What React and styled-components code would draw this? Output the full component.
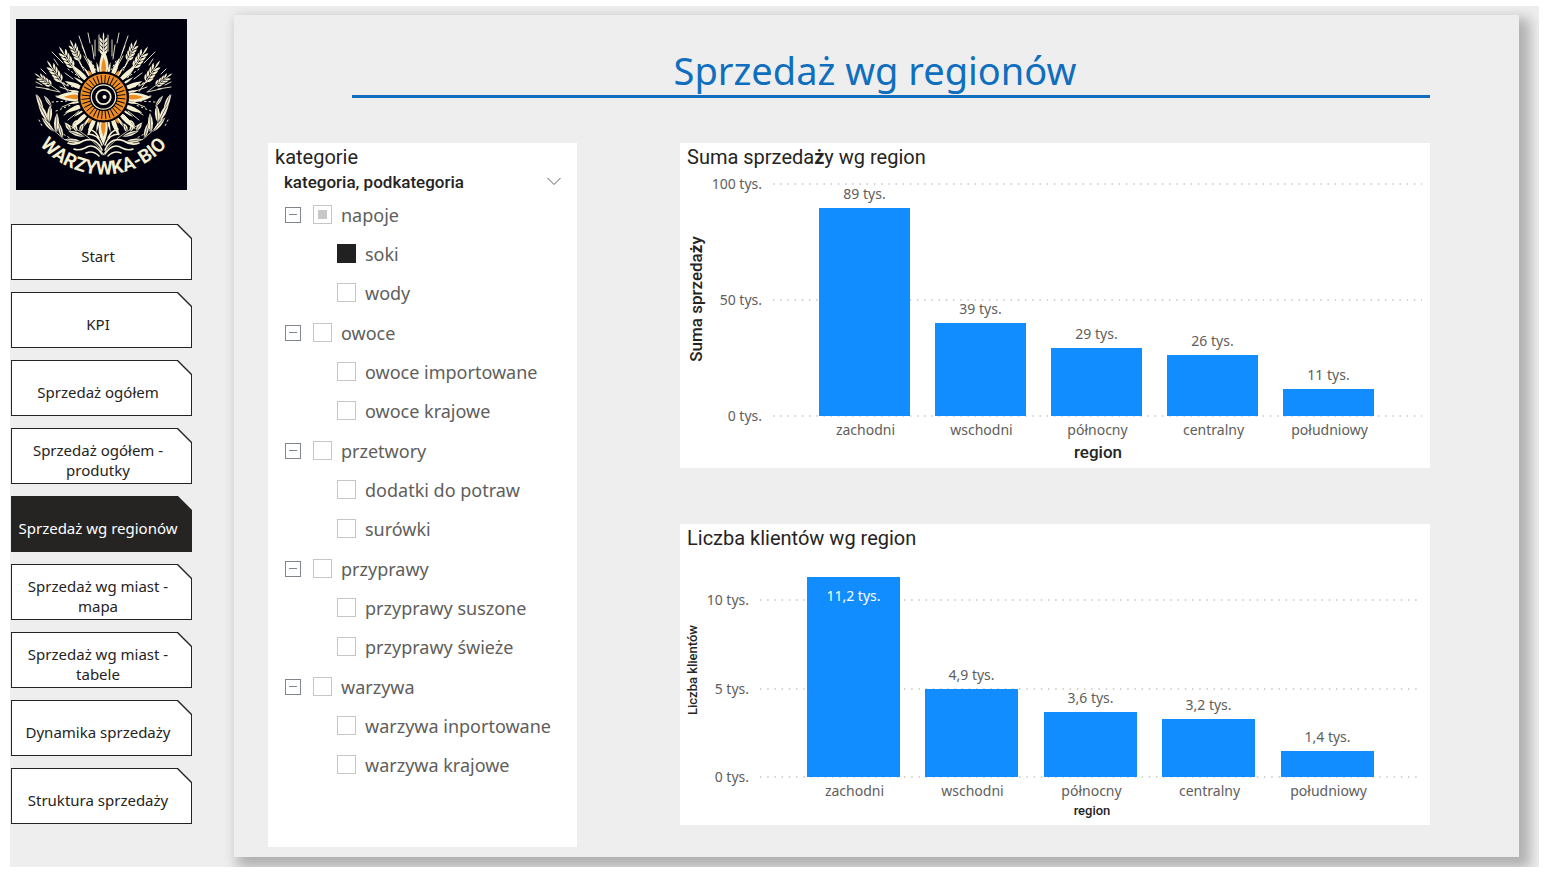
import React, { useEffect, useRef, useState } from 'react';
import styled, { createGlobalStyle } from 'styled-components';

const SANS = '"Noto Sans", "Liberation Sans", sans-serif';
const DIN = 'Roboto, "Noto Sans", sans-serif';
const INK = '#252423';
const MUTED = '#605e5c';
const BLUE = '#118dff';
const CREAM = '#f6f0d2';
const ORANGE = '#ee8d22';
const NIGHT = '#00000f';

const GlobalStyle = createGlobalStyle`
  *, *::before, *::after { box-sizing: border-box; }
  body { margin: 0; background: #fff; color: ${INK}; font-family: ${SANS}; }
  h1, h2, h3, ul { margin: 0; padding: 0; }
  ul { list-style: none; }
  button { font: inherit; }
`;

const Canvas = styled.div`
  display: flex;
  gap: 42px;
  margin: 6px 12px 8px 10px;
  padding: 9px 20px 10px 0;
  background: #eee;
  overflow: hidden;
`;

const Sidebar = styled.aside`
  flex: 0 0 182px;
  display: flex;
  flex-direction: column;
  gap: 34px;
  padding-top: 4px;
`;

const LogoBox = styled.svg`
  display: block;
  width: 171px;
  height: 171px;
  margin-left: 6px;
`;

const Nav = styled.nav`
  display: flex;
  flex-direction: column;
  gap: 12px;
  padding-left: 1px;
`;

const NavButton = styled.button`
  position: relative;
  isolation: isolate;
  height: 56px;
  padding: 8px 9px 0 2px;
  border: 0;
  background: ${INK};
  color: ${(p) => (p.$active ? '#fff' : INK)};
  font-size: 15px;
  line-height: 20px;
  text-align: center;
  cursor: pointer;
  clip-path: polygon(0 0, calc(100% - 14px) 0, 100% 14px, 100% 100%, 0 100%);

  &::before {
    content: '';
    position: absolute;
    z-index: -1;
    inset: 1px;
    background: ${(p) => (p.$active ? INK : '#fff')};
    clip-path: polygon(0 0, calc(100% - 14px) 0, 100% 14px, 100% 100%, 0 100%);
  }
`;

const Report = styled.main`
  flex: 1;
  min-width: 0;
  padding: 0 89px 10px 34px;
  background: #eee;
  box-shadow: 7px 7px 12px 4px rgba(0, 0, 0, 0.26);
`;

const Title = styled.h1`
  margin: 0 0 45px 84px;
  padding: 31px 32px 0 0;
  border-bottom: 3px solid #106ebe;
  color: #106ebe;
  font-size: 38px;
  font-weight: 400;
  line-height: 49px;
  text-align: center;
`;

const Columns = styled.div`
  display: grid;
  grid-template-columns: 309px minmax(0, 1fr);
  gap: 103px;
`;

const Charts = styled.div`
  display: flex;
  flex-direction: column;
  gap: 56px;
`;

const Card = styled.section`
  background: #fff;
`;

const SlicerCard = styled(Card)`
  min-height: 704px;
`;

const CardTitle = styled.h2`
  padding: 0 7px;
  font-family: ${DIN};
  font-size: 20px;
  font-weight: 400;
  line-height: 28px;
`;

const SlicerHeader = styled.div`
  display: flex;
  align-items: center;
  justify-content: space-between;
  height: 24px;
  padding: 0 16px 2px;
`;

const SlicerField = styled.h3`
  font-family: ${DIN};
  font-size: 17px;
  font-weight: 500;
  line-height: 24px;
`;

const IconButton = styled.button`
  display: flex;
  padding: 0;
  border: 0;
  background: none;
  cursor: pointer;
`;

const Tree = styled.ul`
  padding: 0 17px;
`;

const Group = styled.li`
  & + & { margin-top: 1px; }
`;

const Row = styled.div`
  display: flex;
  align-items: center;
  gap: 12px;
  height: 39px;
  padding-left: ${(p) => (p.$child ? 52 : 0)}px;
`;

const OptionLabel = styled.label`
  display: flex;
  align-items: center;
  gap: 9px;
  color: ${MUTED};
  font-size: 18px;
  line-height: 24px;
  white-space: nowrap;
`;

const Tick = styled.input`
  appearance: none;
  width: 19px;
  height: 19px;
  margin: 0;
  border: 1px solid #c8c6c4;
  background: #fff;

  &:checked { background: #212121; border-color: #212121; }
  &:indeterminate {
    background: #c8c8c8;
    box-shadow: inset 0 0 0 4px #fff;
  }
`;

const ChartSvg = styled.svg`
  display: block;
  width: 100%;
  height: auto;
`;

const AxisText = styled.text`
  fill: ${(p) => (p.$inside ? '#fff' : MUTED)};
  font-family: ${SANS};
  font-size: 14px;
`;

const AxisTitle = styled.text`
  fill: ${INK};
  font-family: ${DIN};
  font-size: ${(p) => p.$size}px;
  font-weight: 500;
  text-anchor: middle;
`;

const LogoText = styled.text`
  fill: ${CREAM};
  font-family: Roboto, "Liberation Sans", sans-serif;
  font-size: 19px;
  font-weight: 700;
  text-anchor: middle;
`;

/* ---------- logo ---------- */

const CX = 87.5;
const CY = 78;

function Flame({ angle, from, to, width, fill }) {
  const mid = from + (to - from) * 0.35;
  return (
    <path
      transform={`translate(${CX} ${CY}) rotate(${angle})`}
      fill={fill}
      d={`M${-width * 0.6} ${-from} Q${-width} ${-mid} 0 ${-to} Q${width * 1.3} ${-mid} ${width * 0.6} ${-from}Z`}
    />
  );
}

function Wheat({ x, y, angle, scale = 1 }) {
  return (
    <g transform={`translate(${x} ${y}) rotate(${angle}) scale(${scale})`} fill={CREAM}>
      <path d="M0 2V29" stroke={CREAM} strokeWidth="0.8" />
      <path d="M0 -5Q-1.6 0 0 3Q1.6 0 0 -5Z" />
      {[3, 7, 11, 15].map((d) => (
        <path
          key={d}
          d={`M-0.4 ${d + 3}Q-4.6 ${d + 1.4} -3.8 ${d - 3}Q-0.8 ${d - 1} -0.4 ${d + 3}ZM0.4 ${d + 3}Q4.6 ${d + 1.4} 3.8 ${d - 3}Q0.8 ${d - 1} 0.4 ${d + 3}Z`}
        />
      ))}
    </g>
  );
}

function Leaf({ x, y, angle, len = 14, w = 3 }) {
  return (
    <g transform={`translate(${x} ${y}) rotate(${angle})`}>
      <path fill={CREAM} d={`M0 0Q${-w} ${-len / 2} 0 ${-len}Q${w} ${-len / 2} 0 0Z`} />
      <path stroke={NIGHT} strokeWidth="0.5" d={`M0 0V${-len + 3}`} />
    </g>
  );
}

function HalfGarland() {
  return (
    <g fill="none" strokeLinecap="round">
      <Wheat x={56} y={25} angle={-24} />
      <Wheat x={46} y={32} angle={-33} scale={1.1} />
      <Wheat x={34} y={46} angle={-34} scale={1.1} />
      <Wheat x={22} y={57} angle={-54} scale={0.9} />
      <path
        stroke={CREAM}
        strokeWidth="0.9"
        d="M36 33L47 44M63 17L69 34M72 14L74 24M79 21V37M83 16V32M66 27L72 42M68 37L74 48M20 68L33 70M25 50L30 55M38 40L42 46M53 40L60 50M76 26L78 40M59 35L66 48M49 54L57 60M20 63L26 66M44 68L58 73M46 88L58 83M48 96L60 88M52 101L63 92M57 106L67 96M66 107L73 99M74 110L79 102M30 70L44 73M38 60L52 67"
      />
      <path
        stroke={CREAM}
        strokeWidth="1"
        strokeDasharray="1.5 3"
        d="M40 77L50 78M36 83L52 82M40 92L55 86M43 62L57 68M52 50L63 58M64 44L71 53M75 42L80 51M58 108L67 100M23 101L27 109M33 104L37 111M40 111L54 119"
      />
      <path stroke={CREAM} strokeWidth="0.8" d="M20 76Q25 104 49 121M88 136Q78 118 49 104" />
      <Leaf x={27} y={91} angle={-22} len={17} w={4} />
      <Leaf x={32} y={102} angle={-28} len={19} w={5} />
      <Leaf x={38} y={113} angle={-40} len={19} w={4} />
      <Leaf x={33} y={104} angle={4} len={18} w={5} />
      <Leaf x={40} y={114} angle={3} len={20} w={5} />
      <Leaf x={47} y={120} angle={-16} len={18} w={4} />
      <Leaf x={36} y={88} angle={-35} len={14} w={3} />
      <Leaf x={55} y={112} angle={-34} len={10} w={4} />
      <Leaf x={61} y={113} angle={-24} len={10} w={4} />
      <Leaf x={57} y={109} angle={24} len={9} w={4} />
      <Leaf x={64} y={113} angle={18} len={9} w={4} />
      <Leaf x={69} y={118} angle={-70} len={18} w={4} />
      <Leaf x={66} y={123} angle={-82} len={18} w={4} />
      <path
        stroke={CREAM}
        strokeWidth="1.6"
        d="M86 131Q80 117 67 122Q60 127 52 124M86 135Q78 123 69 129Q63 132 58 130M86 126Q82 115 72 115M83 137Q77 131 70 134M83 119Q80 112 73 110"
      />
    </g>
  );
}

function Logo() {
  const spokes = Array.from({ length: 32 }, (_, i) => i * 11.25);
  return (
    <LogoBox viewBox="0 0 171 171" role="img" aria-label="Warzywka-Bio">
      <rect width="171" height="171" fill={NIGHT} />
      <HalfGarland />
      <g transform="translate(175 0) scale(-1 1)">
        <HalfGarland />
      </g>
      <Wheat x={87.5} y={18} angle={0} />
      {spokes.map((a, i) => (
        <Flame key={a} angle={a} from={25} to={i % 2 ? 36 : 41} width={1.4} fill={CREAM} />
      ))}
      {[22, 45, 68, 112, 135, 158, 202, 225, 248, 292, 315, 338].map((a) => (
        <Flame key={a} angle={a} from={25} to={a % 45 ? 42 : 46} width={3} fill={CREAM} />
      ))}
      {[30, 150, 210, 330].map((a) => (
        <Flame key={a} angle={a} from={24} to={31} width={2} fill={ORANGE} />
      ))}
      {[0, 90, 180, 270].map((a) => (
        <g key={a}>
          <Flame angle={a} from={25} to={48} width={6} fill={CREAM} />
          <Flame angle={a} from={25} to={40} width={3} fill={ORANGE} />
        </g>
      ))}
      <circle cx={CX} cy={CY} r="25.5" fill={NIGHT} />
      <circle cx={CX} cy={CY} r="18.5" fill="none" stroke={ORANGE} strokeWidth="9.5" />
      {spokes.map((a) => (
        <path key={a} transform={`translate(${CX} ${CY}) rotate(${a + 5})`} stroke={NIGHT} strokeWidth="0.9" d="M0 -13V-22" />
      ))}
      <circle cx={CX} cy={CY} r="14" fill={NIGHT} />
      <circle cx={CX} cy={CY} r="12.2" fill="none" stroke={CREAM} strokeWidth="1.2" />
      <circle cx={CX} cy={CY} r="7.2" fill="none" stroke={CREAM} strokeWidth="1.8" />
      <circle cx={CX + 1} cy={CY} r="2" fill={CREAM} />
      <path id="logo-arc" d="M4 72A83 83 0 0 0 171 72" fill="none" />
      <LogoText>
        <textPath href="#logo-arc" startOffset="50%">WARZYWKA-BIO</textPath>
      </LogoText>
    </LogoBox>
  );
}

/* ---------- slicer ---------- */

const CATEGORIES = [
  { name: 'napoje', items: ['soki', 'wody'] },
  { name: 'owoce', items: ['owoce importowane', 'owoce krajowe'] },
  { name: 'przetwory', items: ['dodatki do potraw', 'surówki'] },
  { name: 'przyprawy', items: ['przyprawy suszone', 'przyprawy świeże'] },
  { name: 'warzywa', items: ['warzywa inportowane', 'warzywa krajowe'] },
];

function Option({ name, checked, partial = false, onChange }) {
  const ref = useRef(null);
  useEffect(() => {
    ref.current.indeterminate = partial;
  }, [partial]);
  return (
    <OptionLabel>
      <Tick ref={ref} type="checkbox" checked={checked} onChange={onChange} />
      {name}
    </OptionLabel>
  );
}

function Slicer() {
  const [selected, setSelected] = useState(['soki']);
  const [closed, setClosed] = useState([]);
  const flip = (list, name) => (list.includes(name) ? list.filter((n) => n !== name) : [...list, name]);

  return (
    <SlicerCard>
      <CardTitle>kategorie</CardTitle>
      <SlicerHeader>
        <SlicerField>kategoria, podkategoria</SlicerField>
        <IconButton type="button" aria-label="Rozwiń listę">
          <svg width="14" height="12" viewBox="0 0 14 12" fill="none" stroke={MUTED}>
            <path d="M0.5 2L7 8.5L13.5 2" />
          </svg>
        </IconButton>
      </SlicerHeader>
      <Tree>
        {CATEGORIES.map(({ name, items }) => {
          const count = items.filter((i) => selected.includes(i)).length;
          const all = count === items.length;
          return (
            <Group key={name}>
              <Row>
                <IconButton type="button" aria-label={`Zwiń ${name}`} onClick={() => setClosed(flip(closed, name))}>
                  <svg width="16" height="16" viewBox="0 0 16 16" fill="none" stroke="#80868c">
                    <rect x="0.5" y="0.5" width="15" height="15" />
                    <path d={closed.includes(name) ? 'M4 7.5H12M8 4V12' : 'M4 7.5H12'} />
                  </svg>
                </IconButton>
                <Option
                  name={name}
                  checked={all}
                  partial={count > 0 && !all}
                  onChange={() =>
                    setSelected([...selected.filter((s) => !items.includes(s)), ...(all ? [] : items)])
                  }
                />
              </Row>
              {!closed.includes(name) &&
                items.map((item) => (
                  <Row key={item} $child>
                    <Option
                      name={item}
                      checked={selected.includes(item)}
                      onChange={() => setSelected(flip(selected, item))}
                    />
                  </Row>
                ))}
            </Group>
          );
        })}
      </Tree>
    </SlicerCard>
  );
}

/* ---------- charts ---------- */

const REGIONS = ['zachodni', 'wschodni', 'północny', 'centralny', 'południowy'];

const SALES = {
  height: 297,
  base: 245,
  unit: 2.32,
  ticks: [0, 50, 100],
  gridX: 93,
  barX: 139,
  barWidth: 91,
  pitch: 116,
  values: [89.8, 40, 29.2, 26.2, 11.5],
  labels: ['89 tys.', '39 tys.', '29 tys.', '26 tys.', '11 tys.'],
  titleSize: 17,
  xTitle: { x: 418, y: 287 },
  yTitle: { x: 22, y: 128 },
};

const CLIENTS = {
  height: 273,
  base: 225,
  unit: 17.66,
  ticks: [0, 5, 10],
  gridX: 80,
  barX: 127,
  barWidth: 93,
  pitch: 118.5,
  values: [11.33, 4.98, 3.68, 3.28, 1.47],
  labels: ['11,2 tys.', '4,9 tys.', '3,6 tys.', '3,2 tys.', '1,4 tys.'],
  insideFirst: true,
  titleSize: 13,
  xTitle: { x: 412, y: 263 },
  yTitle: { x: 17, y: 118 },
};

function BarChart({ chart, name, yTitle }) {
  const { base, unit, titleSize } = chart;
  return (
    <ChartSvg viewBox={`0 0 750 ${chart.height}`} role="img" aria-label={name}>
      {chart.ticks.map((t) => {
        const y = Math.round(base - t * unit);
        return (
          <g key={t}>
            <path d={`M${chart.gridX} ${y}H742`} stroke="#c8c6c4" strokeWidth="1.4" strokeDasharray="1.5 5.7" />
            <AxisText x={chart.gridX - 11} y={y + 5} textAnchor="end">{`${t} tys.`}</AxisText>
          </g>
        );
      })}
      {REGIONS.map((region, i) => {
        const x = Math.floor(chart.barX + i * chart.pitch);
        const height = Math.round(chart.values[i] * unit);
        const center = x + chart.barWidth / 2;
        const inside = Boolean(chart.insideFirst && i === 0);
        return (
          <g key={region} textAnchor="middle">
            <rect x={x} y={base - height} width={chart.barWidth} height={height} fill={BLUE} />
            <AxisText $inside={inside} x={center} y={base - height + (inside ? 24 : -9)}>
              {chart.labels[i]}
            </AxisText>
            <AxisText x={center + 1} y={base + 19}>{region}</AxisText>
          </g>
        );
      })}
      <AxisTitle $size={titleSize} x={chart.xTitle.x} y={chart.xTitle.y}>region</AxisTitle>
      <AxisTitle $size={titleSize} transform={`translate(${chart.yTitle.x} ${chart.yTitle.y}) rotate(-90)`}>
        {yTitle}
      </AxisTitle>
    </ChartSvg>
  );
}

/* ---------- page ---------- */

const PAGES = [
  'Start',
  'KPI',
  'Sprzedaż ogółem',
  'Sprzedaż ogółem - produtky',
  'Sprzedaż wg regionów',
  'Sprzedaż wg miast - mapa',
  'Sprzedaż wg miast - tabele',
  'Dynamika sprzedaży',
  'Struktura sprzedaży',
];

export default function App() {
  const [page, setPage] = useState('Sprzedaż wg regionów');
  return (
    <>
      <GlobalStyle />
      <Canvas>
        <Sidebar>
          <Logo />
          <Nav>
            {PAGES.map((p) => (
              <NavButton key={p} type="button" $active={p === page} onClick={() => setPage(p)}>
                {p}
              </NavButton>
            ))}
          </Nav>
        </Sidebar>
        <Report>
          <Title>Sprzedaż wg regionów</Title>
          <Columns>
            <Slicer />
            <Charts>
              <Card>
                <CardTitle>Suma sprzeda<b>ż</b>y wg region</CardTitle>
                <BarChart
                  chart={SALES}
                  name="Suma sprzedaży wg region"
                  yTitle={<>Suma sprzeda<tspan fontWeight="700">ż</tspan>y</>}
                />
              </Card>
              <Card>
                <CardTitle>Liczba klientów wg region</CardTitle>
                <BarChart chart={CLIENTS} name="Liczba klientów wg region" yTitle="Liczba klientów" />
              </Card>
            </Charts>
          </Columns>
        </Report>
      </Canvas>
    </>
  );
}
